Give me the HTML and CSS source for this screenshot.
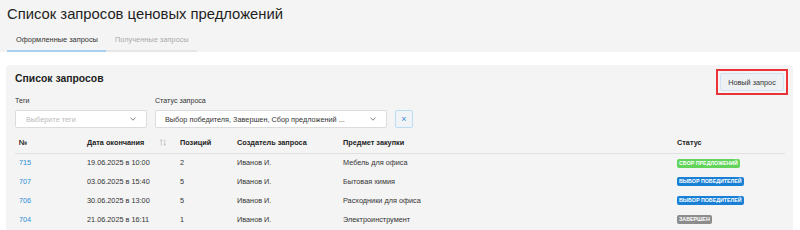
FILE: index.html
```html
<!DOCTYPE html>
<html lang="ru">
<head>
<meta charset="utf-8">
<link rel="stylesheet" href="styles.css">
</head>
<body>
<header class="top">
  <h1 class="title">Список запросов ценовых предложений</h1>
  <nav class="tabs">
    <div class="tab active">Оформленные запросы</div>
    <div class="tab">Полученные запросы</div>
  </nav>
</header>
<section class="card">
  <div class="card-head">
    <h2 class="card-title">Список запросов</h2>
    <div class="highlight"><button class="btn-new">Новый запрос</button></div>
  </div>
  <div class="filters">
    <div class="field">
      <label class="lbl">Теги</label>
      <div class="select sel-tags"><span class="ph">Выберите теги</span><svg class="chev" width="6" height="4" viewBox="0 0 6 4"><path d="M0.5 0.6 L3 3.2 L5.5 0.6" fill="none" stroke="#777" stroke-width="0.9"/></svg></div>
    </div>
    <div class="field">
      <label class="lbl">Статус запроса</label>
      <div class="select sel-status"><span class="val">Выбор победителя, Завершен, Сбор предложений ...</span><svg class="chev" width="6" height="4" viewBox="0 0 6 4"><path d="M0.5 0.6 L3 3.2 L5.5 0.6" fill="none" stroke="#777" stroke-width="0.9"/></svg></div>
    </div>
    <button class="btn-clear">×</button>
  </div>
  <table class="grid">
    <thead>
      <tr>
        <th class="c1">№</th>
        <th class="c2"><span class="sortable">Дата окончания<svg class="sort" width="6" height="7" viewBox="0 0 6 7"><path d="M1.3 6.6 V0.6 M0.2 1.8 L1.3 0.6 L2.4 1.8 M4.7 0.4 V6.4 M3.6 5.2 L4.7 6.4 L5.8 5.2" fill="none" stroke="#c2c2c2" stroke-width="0.8"/></svg></span></th>
        <th class="c3">Позиций</th>
        <th class="c4">Создатель запроса</th>
        <th class="c5">Предмет закупки</th>
        <th class="c6">Статус</th>
      </tr>
    </thead>
    <tbody>
      <tr><td><a class="lnk">715</a></td><td>19.06.2025 в 10:00</td><td>2</td><td>Иванов И.</td><td>Мебель для офиса</td><td><span class="badge green">Сбор предложений</span></td></tr>
      <tr><td><a class="lnk">707</a></td><td>03.06.2025 в 15:40</td><td>5</td><td>Иванов И.</td><td>Бытовая химия</td><td><span class="badge blue">Выбор победителей</span></td></tr>
      <tr><td><a class="lnk">706</a></td><td>30.06.2025 в 13:00</td><td>5</td><td>Иванов И.</td><td>Расходники для офиса</td><td><span class="badge blue">Выбор победителей</span></td></tr>
      <tr><td><a class="lnk">704</a></td><td>21.06.2025 в 16:11</td><td>1</td><td>Иванов И.</td><td>Электроинструмент</td><td><span class="badge gray">Завершен</span></td></tr>
    </tbody>
  </table>
</section>
</body>
</html>
```

FILE: styles.css
```css
* { box-sizing: border-box; }
html, body { margin: 0; padding: 0; }
body {
  background: #ffffff;
  font-family: "Liberation Sans", Arial, sans-serif;
  color: #222;
  overflow: hidden;
  height: 230px;
}
.top {
  background: #f4f4f4;
  height: 52px;
  padding: 4px 7px 0;
  display: flex;
  flex-direction: column;
}
.title {
  margin: 0;
  font-size: 14.8px;
  font-weight: normal;
  line-height: 20px;
  color: #1e1e1e;
}
.tabs {
  display: flex;
  margin-top: auto;
}
.tab {
  font-size: 7.4px;
  line-height: 11px;
  padding: 5px 8px 5px 9px;
  border-bottom: 2px solid #e6e6e6;
  color: #aaa;
  white-space: nowrap;
}
.tab.active {
  color: #333;
  border-bottom-color: #a9d0ee;
}
.card {
  margin: 13px 7px 0 6px;
  background: #f4f4f4;
  border-radius: 4px;
  padding: 4px 5px 0 9px;
  height: 170px;
}
.card-head {
  display: flex;
  justify-content: space-between;
  align-items: flex-start;
  height: 27px;
}
.card-title {
  margin: 4px 0 0;
  font-size: 10.4px;
  line-height: 12px;
  font-weight: bold;
  color: #1e1e1e;
}
.highlight {
  border: 2px solid #e8333b;
  padding: 2px;
  display: flex;
}
.btn-new {
  font-family: inherit;
  font-size: 7.3px;
  color: #333;
  background: #eef1f4;
  border: 1px solid #cfe3f4;
  border-radius: 2px;
  width: 64px;
  height: 18px;
  padding: 0;
}
.filters {
  display: flex;
  align-items: flex-end;
  gap: 8px;
  margin-top: 1px;
}
.field { display: flex; flex-direction: column; }
.lbl {
  font-size: 7.1px;
  line-height: 9px;
  color: #333;
  margin-bottom: 4px;
}
.select {
  height: 18px;
  background: #fff;
  border: 1px solid #dcdcdc;
  border-radius: 2px;
  display: flex;
  align-items: center;
  justify-content: space-between;
  padding: 0 10px 0 9px;
  font-size: 7.3px;
  white-space: nowrap;
}
.sel-tags { width: 132px; }
.sel-tags .ph { margin-left: 1px; }
.sel-status { width: 232px; }
.ph { color: #bbb; }
.val { color: #333; }
.chev { display: block; flex: none; }
.btn-clear {
  width: 18px;
  height: 18px;
  padding: 0;
  background: #f1f4f7;
  border: 1px solid #bcdcf2;
  border-radius: 2px;
  color: #3c8fd0;
  font-size: 9px;
  line-height: 14px;
  font-family: inherit;
}
.grid {
  margin-top: 5px;
  width: 770px;
  border-collapse: collapse;
  table-layout: fixed;
  font-size: 7.3px;
  white-space: nowrap;
}
.grid th {
  text-align: left;
  font-weight: bold;
  color: #222;
  height: 20px;
  padding: 0 4px;
  border-bottom: 1px solid #e2e2e2;
}
.grid td {
  height: 19px;
  padding: 0 4px;
  color: #333;
  vertical-align: middle;
}
.c1 { width: 68px; }
.c2 { width: 93px; }
.c3 { width: 57px; }
.c4 { width: 106px; }
.c5 { width: 334px; }
.c6 { width: 112px; }
.sortable { display: inline-flex; align-items: center; }
.sort { margin-left: 16px; }
.lnk { color: #2e8fd6; text-decoration: none; }
.badge {
  display: inline-block;
  font-size: 5.3px;
  font-weight: bold;
  text-transform: uppercase;
  color: #fff;
  line-height: 9px;
  padding: 0 2px;
  border-radius: 2px;
  vertical-align: middle;
}
.green { background: #62d45a; }
.blue { background: #1a80d6; }
.gray { background: #8c8c8c; }
```
